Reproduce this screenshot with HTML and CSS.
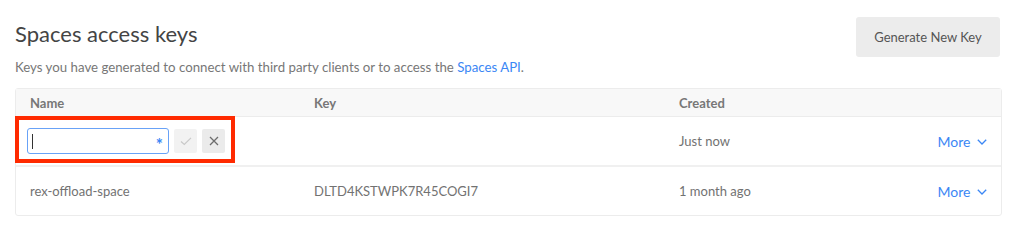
FILE: index.html
```html
<!DOCTYPE html>
<html lang="en">
<head>
    <meta charset="UTF-8">
    <title>Spaces access keys</title>
    <link rel="stylesheet" href="styles.css">
</head>
<body>
    <div class="page">
        <div class="header">
            <div class="header-text">
                <h2 class="title">Spaces access keys</h2>
                <p class="subtitle">Keys you have generated to connect with third party clients or to access the <a href="#" class="link">Spaces API</a>.</p>
            </div>
            <button class="btn">Generate New Key</button>
        </div>

        <table class="keys-table">
            <thead>
                <tr>
                    <th class="col-name">Name</th>
                    <th class="col-key">Key</th>
                    <th class="col-created">Created</th>
                    <th class="col-more"></th>
                </tr>
            </thead>
            <tbody>
                <tr>
                    <td class="edit-cell">
                        <div class="edit-row">
                            <div class="input-wrap">
                                <span class="caret"></span>
                                <span class="required">*</span>
                            </div>
                            <button class="icon-btn confirm">
                                <svg width="12" height="12" viewBox="0 0 12 12"><path d="M1 6.5 L4.3 9.5 L11 2.8" fill="none" stroke="#c9c9c9" stroke-width="1.2"/></svg>
                            </button>
                            <button class="icon-btn cancel">
                                <svg width="10" height="10" viewBox="0 0 10 10"><path d="M1 1 L9 9 M9 1 L1 9" fill="none" stroke="#6d6d6d" stroke-width="1.3"/></svg>
                            </button>
                        </div>
                        <div class="highlight"></div>
                    </td>
                    <td></td>
                    <td>Just now</td>
                    <td class="col-more"><a href="#" class="more">More <svg width="10" height="6" viewBox="0 0 10 6"><path d="M0.8 0.8 L5 5 L9.2 0.8" fill="none" stroke="#3b87f5" stroke-width="1.3"/></svg></a></td>
                </tr>
                <tr>
                    <td>rex-offload-space</td>
                    <td>DLTD4KSTWPK7R45COGI7</td>
                    <td>1 month ago</td>
                    <td class="col-more"><a href="#" class="more">More <svg width="10" height="6" viewBox="0 0 10 6"><path d="M0.8 0.8 L5 5 L9.2 0.8" fill="none" stroke="#3b87f5" stroke-width="1.3"/></svg></a></td>
                </tr>
            </tbody>
        </table>
    </div>
</body>
</html>
```

FILE: styles.css
```css
body {
    margin: 0;
    font-family: "Lato", "Liberation Sans", sans-serif;
    background: #fff;
    color: #676767;
}
.page {
    padding: 17px 22px 0 15px;
}
.header {
    display: flex;
    justify-content: space-between;
    align-items: flex-start;
}
.title {
    margin: 0;
    padding-top: 3px;
    font-size: 22px;
    font-weight: 400;
    color: #444;
    line-height: 28px;
}
.subtitle {
    margin: 11px 0 0 0;
    font-size: 13.25px;
    line-height: 16px;
    color: #777;
}
.link {
    color: #3b87f5;
    text-decoration: none;
}
.btn {
    width: 144px;
    height: 40px;
    margin-right: 2px;
    background: #ececec;
    border: none;
    border-radius: 3px;
    color: #555;
    font-family: inherit;
    font-size: 13px;
    font-weight: 400;
}
.keys-table {
    width: 100%;
    margin-top: 13px;
    border-collapse: separate;
    border-spacing: 0;
    border: 1px solid #ececec;
    border-radius: 3px;
    font-size: 13px;
}
.keys-table th {
    background: #f8f8f8;
    height: 27px;
    padding: 0 14px;
    text-align: left;
    font-weight: 700;
    color: #777;
    border-bottom: 1px solid #ececec;
}
.keys-table td {
    height: 48px;
    padding: 0 14px;
    color: #727272;
}
.keys-table tbody tr:first-child td {
    border-bottom: 2px solid #f0f0f0;
}
.col-name {
    width: 256px;
}
.col-key {
    width: 337px;
}
.col-created {
    width: 230px;
}
.col-more {
    text-align: right;
    white-space: nowrap;
}
.keys-table td.col-more {
    padding-right: 14px;
}
.more {
    color: #3b87f5;
    text-decoration: none;
    font-size: 14px;
    white-space: nowrap;
}
.more svg {
    margin-left: 3px;
    vertical-align: 2px;
}
.edit-cell {
    position: relative;
}
.edit-row {
    display: flex;
    align-items: center;
    gap: 5px;
    margin-left: -3px;
}
.input-wrap {
    position: relative;
    width: 140px;
    height: 24px;
    border: 1px solid #68a2f7;
    border-radius: 3px;
    background: #fff;
}
.caret {
    position: absolute;
    left: 4px;
    top: 5px;
    width: 1px;
    height: 15px;
    background: #333;
}
.required {
    position: absolute;
    right: 5px;
    top: 9px;
    color: #3b87f5;
    font-size: 17px;
    font-weight: 700;
    line-height: 14px;
}
.icon-btn {
    width: 23px;
    height: 24px;
    padding: 0;
    border: none;
    border-radius: 2px;
    display: flex;
    align-items: center;
    justify-content: center;
}
.confirm {
    background: #f2f2f2;
}
.cancel {
    background: #ebebeb;
}
.highlight {
    position: absolute;
    left: -1px;
    top: -1px;
    width: 212px;
    height: 39px;
    border: 4px solid #ff2a00;
}
```
